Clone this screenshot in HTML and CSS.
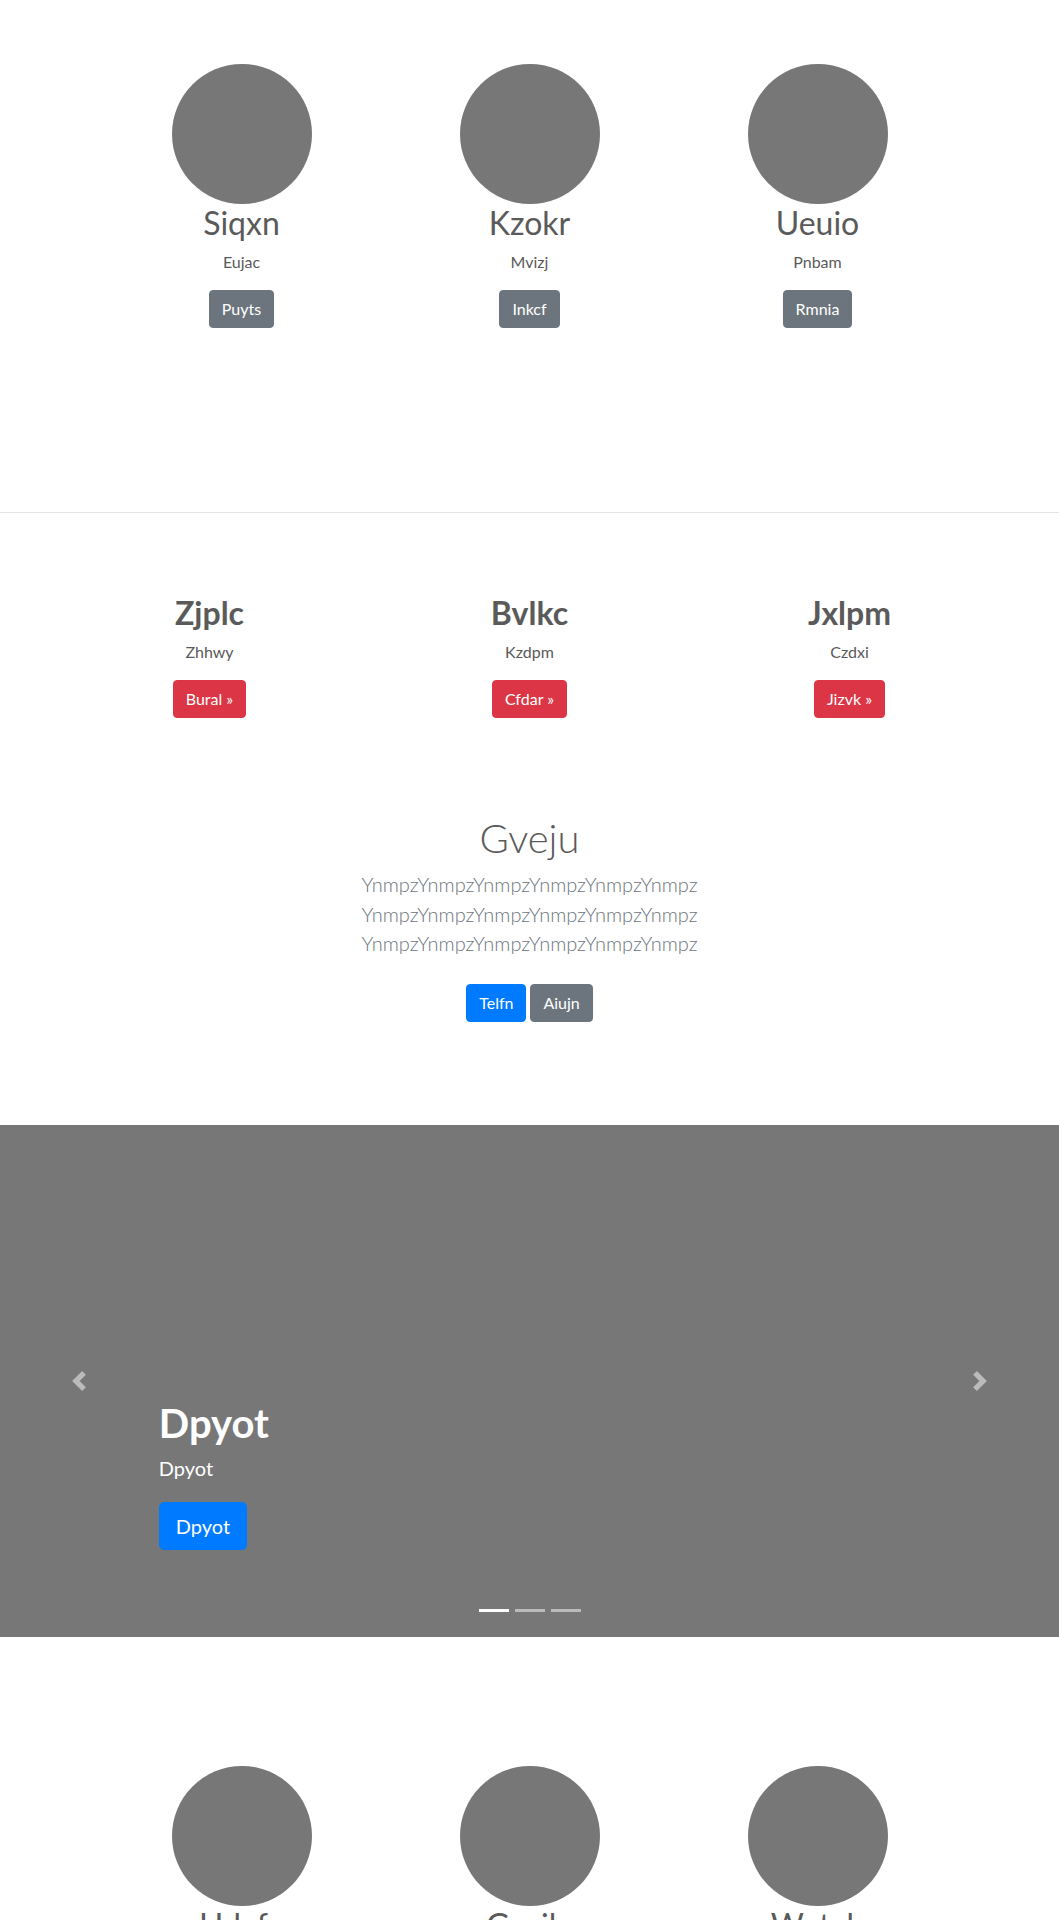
FILE: index.html
```html
<!DOCTYPE html>
<html lang="en">
<head>
<meta charset="utf-8">
<title>Page</title>
<link rel="stylesheet" href="styles.css">
</head>
<body>
<section class="team">
  <div class="team-grid">
    <div class="member">
      <div class="avatar"></div>
      <h2 class="member-name">Siqxn</h2>
      <p class="member-role">Eujac</p>
      <a class="btn btn-secondary" href="#">Puyts</a>
    </div>
    <div class="member">
      <div class="avatar"></div>
      <h2 class="member-name">Kzokr</h2>
      <p class="member-role">Mvizj</p>
      <a class="btn btn-secondary" href="#">Inkcf</a>
    </div>
    <div class="member">
      <div class="avatar"></div>
      <h2 class="member-name">Ueuio</h2>
      <p class="member-role">Pnbam</p>
      <a class="btn btn-secondary" href="#">Rmnia</a>
    </div>
  </div>
</section>

<hr class="divider">

<section class="features">
  <div class="features-grid">
    <div class="member">
      <h2 class="feature-title">Zjplc</h2>
      <p class="member-role">Zhhwy</p>
      <a class="btn btn-danger" href="#">Bural »</a>
    </div>
    <div class="member">
      <h2 class="feature-title">Bvlkc</h2>
      <p class="member-role">Kzdpm</p>
      <a class="btn btn-danger" href="#">Cfdar »</a>
    </div>
    <div class="member">
      <h2 class="feature-title">Jxlpm</h2>
      <p class="member-role">Czdxi</p>
      <a class="btn btn-danger" href="#">Jizvk »</a>
    </div>
  </div>
</section>

<section class="hero">
  <h1 class="hero-title">Gveju</h1>
  <p class="hero-lead">YnmpzYnmpzYnmpzYnmpzYnmpzYnmpz<br>YnmpzYnmpzYnmpzYnmpzYnmpzYnmpz<br>YnmpzYnmpzYnmpzYnmpzYnmpzYnmpz</p>
  <div class="hero-actions">
    <a class="btn btn-primary" href="#">Telfn</a>
    <a class="btn btn-secondary" href="#">Aiujn</a>
  </div>
</section>

<div class="carousel">
  <a class="carousel-control carousel-prev" href="#" aria-label="Previous">
    <svg width="20" height="20" viewBox="0 0 8 8" fill="#fff"><path d="M5.25 0l-4 4 4 4 1.5-1.5L4.25 4l2.5-2.5L5.25 0z"/></svg>
  </a>
  <div class="carousel-caption">
    <h1 class="caption-title">Dpyot</h1>
    <p class="caption-text">Dpyot</p>
    <a class="btn btn-lg btn-primary" href="#">Dpyot</a>
  </div>
  <a class="carousel-control carousel-next" href="#" aria-label="Next">
    <svg width="20" height="20" viewBox="0 0 8 8" fill="#fff"><path d="M2.75 0l-1.5 1.5L3.75 4l-2.5 2.5L2.75 8l4-4-4-4z"/></svg>
  </a>
  <ol class="carousel-indicators">
    <li class="active"></li>
    <li></li>
    <li></li>
  </ol>
</div>

<section class="team team-bottom">
  <div class="team-grid">
    <div class="member">
      <div class="avatar"></div>
      <h2 class="member-name">Hdxfx</h2>
      <p class="member-role">Qwert</p>
      <a class="btn btn-secondary" href="#">Ahsdf</a>
    </div>
    <div class="member">
      <div class="avatar"></div>
      <h2 class="member-name">Gcvilv</h2>
      <p class="member-role">Lmnop</p>
      <a class="btn btn-secondary" href="#">Zxcvb</a>
    </div>
    <div class="member">
      <div class="avatar"></div>
      <h2 class="member-name">Wxtxh</h2>
      <p class="member-role">Yuiop</p>
      <a class="btn btn-secondary" href="#">Ghjkl</a>
    </div>
  </div>
</section>
</body>
</html>
```

FILE: styles.css
```css
body {
  margin: 0;
  font-family: Lato, "Segoe UI", "Open Sans", sans-serif;
  color: #5a5a5a;
  background: #fff;
}

.team {
  padding: 64px 0 184px;
}

.team-bottom {
  padding: 129px 0 80px;
}

.team-grid {
  width: 864px;
  margin: 0 auto;
  display: grid;
  grid-template-columns: repeat(3, 1fr);
}

.features {
  padding: 81px 0 96px;
}

.features-grid {
  width: 960px;
  margin: 0 auto;
  display: grid;
  grid-template-columns: repeat(3, 1fr);
}

.member {
  display: flex;
  flex-direction: column;
  align-items: center;
  text-align: center;
}

.avatar {
  width: 140px;
  height: 140px;
  border-radius: 50%;
  background: #777;
}

.member-name {
  margin: 0 0 8px;
  font-size: 32px;
  font-weight: 400;
  line-height: 38px;
}

.feature-title {
  margin: 0 0 8px;
  font-size: 32px;
  font-weight: 700;
  line-height: 38px;
}

.member-role {
  margin: 0 0 16px;
  font-size: 16px;
  line-height: 24px;
}

.divider {
  margin: 0;
  border: 0;
  border-top: 1px solid rgba(0, 0, 0, 0.1);
}

.btn {
  display: inline-block;
  padding: 6px 12px;
  font-family: inherit;
  font-size: 16px;
  line-height: 24px;
  border: 1px solid transparent;
  border-radius: 4px;
  color: #fff;
  text-decoration: none;
}

.btn-secondary {
  background: #6c757d;
  border-color: #6c757d;
}

.btn-danger {
  background: #dc3545;
  border-color: #dc3545;
}

.btn-primary {
  background: #007bff;
  border-color: #007bff;
}

.btn-lg {
  padding: 8px 16px;
  font-size: 20px;
  line-height: 30px;
  border-radius: 5px;
}

.hero {
  padding: 0 0 103px;
  text-align: center;
}

.hero-title {
  margin: 0 0 8px;
  font-size: 40px;
  font-weight: 300;
  line-height: 48px;
}

.hero-lead {
  margin: 0 0 25px;
  font-size: 20px;
  font-weight: 300;
  line-height: 29.5px;
  color: #6c757d;
}

.hero-actions {
  display: flex;
  justify-content: center;
  gap: 4px;
}

.carousel {
  position: relative;
  height: 512px;
  background: #777;
  color: #fff;
  display: flex;
  flex-direction: column;
  justify-content: flex-end;
}

.carousel-caption {
  display: flex;
  flex-direction: column;
  align-items: flex-start;
  padding: 0 15% 87px;
}

.caption-title {
  margin: 0 0 6px;
  font-size: 40px;
  font-weight: 700;
  line-height: 48px;
}

.caption-text {
  margin: 0 0 19px;
  font-size: 20px;
  line-height: 30px;
}

.carousel-control {
  position: absolute;
  top: 0;
  bottom: 0;
  width: 15%;
  display: flex;
  align-items: center;
  justify-content: center;
  opacity: 0.5;
}

.carousel-prev {
  left: 0;
}

.carousel-next {
  right: 0;
}

.carousel-indicators {
  position: absolute;
  left: 0;
  right: 0;
  bottom: 25px;
  margin: 0;
  padding: 0;
  list-style: none;
  display: flex;
  justify-content: center;
  gap: 6px;
}

.carousel-indicators li {
  width: 30px;
  height: 3px;
  background: rgba(255, 255, 255, 0.5);
}

.carousel-indicators li.active {
  background: #fff;
}
```
